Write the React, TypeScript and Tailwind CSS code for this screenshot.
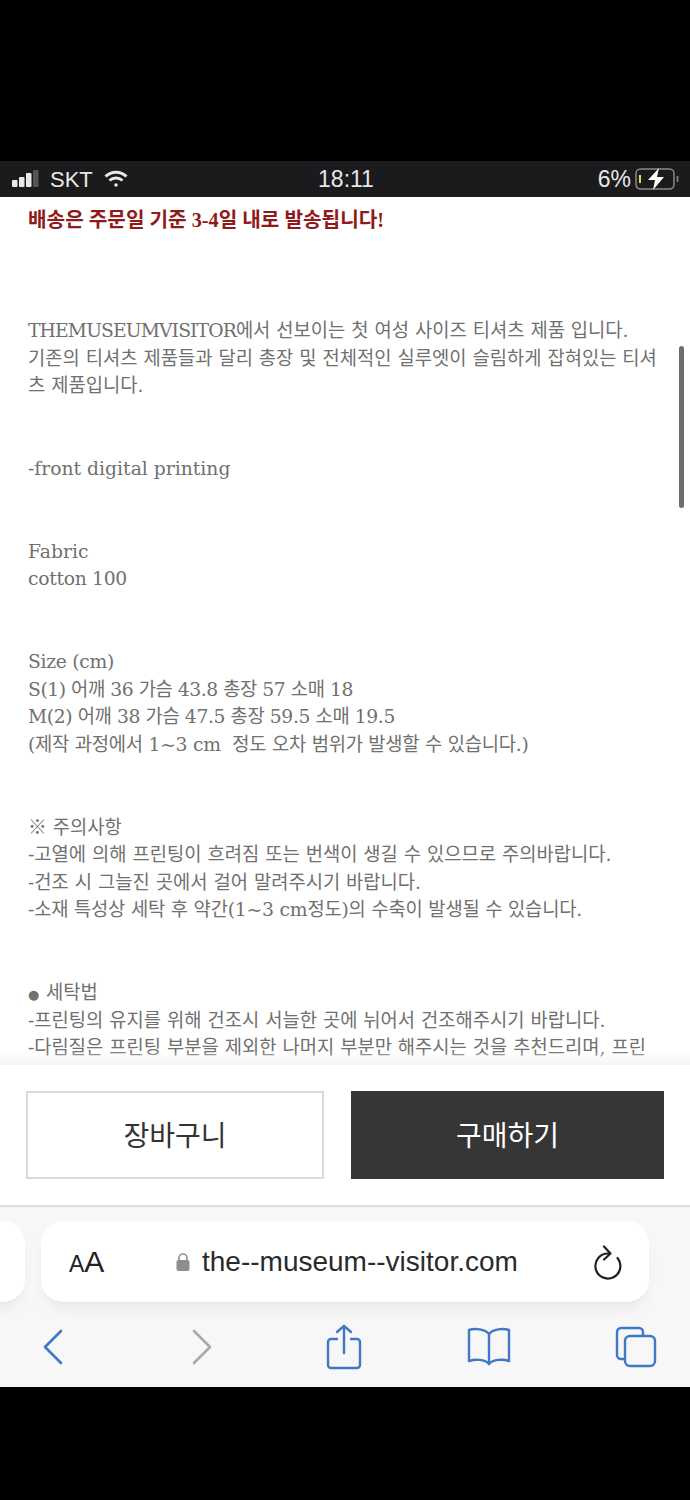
import type { ReactNode } from "react";

const lines: ReactNode[] = [
  <>
    <span className="tracking-[-0.9px]">THEMUSEUMVISITOR</span>에서 선보이는 첫 여성 사이즈 티셔츠 제품 입니다.
  </>,
  "기존의 티셔츠 제품들과 달리 총장 및 전체적인 실루엣이 슬림하게 잡혀있는 티셔",
  "츠 제품입니다.",
  "",
  "",
  "-front digital printing",
  "",
  "",
  "Fabric",
  <span className="tracking-[-0.3px]">cotton 100</span>,
  "",
  "",
  <span className="tracking-[-0.3px]">Size (cm)</span>,
  <span className="tracking-[-0.45px]">S(1) 어깨 36 가슴 43.8 총장 57 소매 18</span>,
  <span className="tracking-[-0.4px]">M(2) 어깨 38 가슴 47.5 총장 59.5 소매 19.5</span>,
  <span className="tracking-[-0.25px]">(제작 과정에서 1~3 cm  정도 오차 범위가 발생할 수 있습니다.)</span>,
  "",
  "",
  "※ 주의사항",
  "-고열에 의해 프린팅이 흐려짐 또는 번색이 생길 수 있으므로 주의바랍니다.",
  "-건조 시 그늘진 곳에서 걸어 말려주시기 바랍니다.",
  <span className="tracking-[-0.2px]">-소재 특성상 세탁 후 약간(1~3 cm정도)의 수축이 발생될 수 있습니다.</span>,
  "",
  "",
  <>
    <span className="inline-block w-[18px] text-[13px]">●</span>세탁법
  </>,
  "-프린팅의 유지를 위해 건조시 서늘한 곳에 뉘어서 건조해주시기 바랍니다.",
  "-다림질은 프린팅 부분을 제외한 나머지 부분만 해주시는 것을 추천드리며, 프린",
];

function StatusBar() {
  return (
    <div className="flex h-9 items-center justify-between bg-[#1b1b1d] pl-3 pr-2.5 text-[22px] text-[#e8e8e8]">
      <div className="flex w-[140px] items-center">
        <svg width="32" height="18" viewBox="0 0 32 18" fill="currentColor">
          <rect x="0" y="10" width="5.5" height="7" rx="1" />
          <rect x="7" y="7" width="5.5" height="10" rx="1" />
          <rect x="14" y="3" width="5.5" height="14" rx="1" />
          <rect x="21" y="0" width="5.5" height="17" rx="1" fill="#555" />
        </svg>
        <span className="ml-[6px]">SKT</span>
        <svg className="ml-[11px]" width="24" height="18" viewBox="0 0 24 18" fill="none" stroke="currentColor" strokeWidth="3">
          <path d="M1.5 6.5a15 15 0 0 1 21 0" />
          <path d="M5.5 10.5a9.5 9.5 0 0 1 13 0" />
          <circle cx="12" cy="15" r="1.8" fill="currentColor" stroke="none" />
        </svg>
      </div>
      <span className="text-[23px] font-medium">18:11</span>
      <div className="flex w-[140px] items-center justify-end">
        <span className="text-[23px]">6%</span>
        <svg className="ml-[4px]" width="45" height="24" viewBox="0 0 45 24" fill="none">
          <rect x="1" y="2" width="38" height="20" rx="4.5" stroke="#8a8a8a" strokeWidth="1.5" />
          <rect x="4" y="8" width="2" height="8" fill="#d8e04a" />
          <path d="M42.5 9v6" stroke="#777" strokeWidth="2" />
          <path d="M24 1 13 13h7l-2 10 11-13h-7z" fill="#fff" />
        </svg>
      </div>
    </div>
  );
}

function Toolbar() {
  return (
    <div className="flex h-[180px] flex-col bg-[#f7f7f7]">
      <div className="flex gap-4 pt-[14px]">
        <div className="-ml-6 h-[81px] w-[49px] rounded-[22px] bg-white shadow-lg shadow-black/5" />
        <div className="flex h-[81px] w-[608px] items-center rounded-[22px] bg-white pl-7 pr-[26px] shadow-lg shadow-black/5">
          <span className="w-[107px] text-[#222]">
            <span className="text-[23px]">A</span>
            <span className="text-[30px]">A</span>
          </span>
          <svg width="14" height="20" viewBox="0 0 14 20" fill="#8e8e8e">
            <path d="M3 8V6a4 4 0 0 1 8 0v2" fill="none" stroke="#8e8e8e" strokeWidth="1.6" />
            <rect x="0.5" y="8" width="13" height="11" rx="2" />
          </svg>
          <span className="ml-[12px] flex-1 text-[28px] text-[#2a2a2a]">the--museum--visitor.com</span>
          <svg width="30" height="36" viewBox="0 0 30 36" fill="none" stroke="#1f1f1f" strokeWidth="2.2" strokeLinecap="round" strokeLinejoin="round">
            <path d="M15 9.5a12.5 12.5 0 1 0 9.5 4.5" />
            <path d="M11 2.5l6.5 7-6.5 6" />
          </svg>
        </div>
      </div>
      <div className="flex items-center pl-[42px] pr-[33px] pt-[22px]">
        <svg width="22" height="36" viewBox="0 0 22 36" fill="none" stroke="#3f78c4" strokeWidth="2.6" strokeLinecap="round" strokeLinejoin="round">
          <path d="M19 2 3 18l16 16" />
        </svg>
        <svg className="ml-[127px]" width="22" height="36" viewBox="0 0 22 36" fill="none" stroke="#a9a9a9" strokeWidth="2.6" strokeLinecap="round" strokeLinejoin="round">
          <path d="M3 2l16 16L3 34" />
        </svg>
        <svg className="ml-[113px]" width="36" height="46" viewBox="0 0 36 46" fill="none" stroke="#3f78c4" strokeWidth="2.4" strokeLinecap="round" strokeLinejoin="round">
          <path d="M11 15H5a3 3 0 0 0-3 3v23a3 3 0 0 0 3 3h26a3 3 0 0 0 3-3V18a3 3 0 0 0-3-3h-6" />
          <path d="M18 29V2M11 8l7-6 7 6" />
        </svg>
        <svg className="ml-[104px]" width="46" height="40" viewBox="0 0 46 40" fill="none" stroke="#3f78c4" strokeWidth="2.4" strokeLinecap="round" strokeLinejoin="round">
          <path d="M23 7C19 2 9 1 3 3v31c6-2 16-2 20 3 4-5 14-5 20-3V3c-6-2-16-1-20 4z" />
          <path d="M23 7v30" />
        </svg>
        <svg className="ml-auto" width="42" height="42" viewBox="0 0 42 42" fill="none" stroke="#3f78c4" strokeWidth="2.4" strokeLinejoin="round">
          <path d="M9 33H6a4 4 0 0 1-4-4V6a4 4 0 0 1 4-4h18a4 4 0 0 1 4 4v4" />
          <rect x="10" y="10" width="30" height="30" rx="5" />
        </svg>
      </div>
    </div>
  );
}

export default function App() {
  return (
    <div className="flex h-[1500px] w-[690px] flex-col overflow-hidden bg-black font-['Liberation_Sans','Noto_Sans_CJK_KR',sans-serif]">
      <div className="h-[161px] shrink-0" />
      <StatusBar />
      <div className="relative h-[868px] shrink-0 overflow-hidden bg-white pl-7">
        <p className="pt-[10px] font-['Liberation_Serif','Noto_Sans_CJK_KR',serif] text-[20.2px] font-bold leading-[27px] text-[#8e1a1a]">
          배송은 주문일 기준 3-4일 내로 발송됩니다!
        </p>
        <div className="pt-[83px] font-['DejaVu_Serif','Noto_Sans_CJK_KR',serif] text-[18.75px] leading-[27.6px] text-[#707070]">
          {lines.map((line, i) => (
            <div key={i} className="h-[27.6px] whitespace-pre">
              {line}
            </div>
          ))}
        </div>
        <div className="absolute left-[679px] top-[149px] h-[162px] w-[5px] rounded-full bg-[#6e6e6e]" />
        <div className="absolute bottom-0 left-0 h-[14px] w-full bg-gradient-to-b from-transparent to-[#f5f5f5]" />
      </div>
      <div className="flex h-[142px] shrink-0 gap-[27px] border-b-2 border-[#dcdcdc] bg-white pl-[26px] pt-[26px]">
        <button className="flex h-[88px] w-[298px] items-center justify-center border-2 border-[#dadada] pt-[3px] text-[28px] text-[#333]">
          장바구니
        </button>
        <button className="flex h-[88px] w-[313px] items-center justify-center bg-[#363636] pt-[3px] text-[28px] text-white">
          구매하기
        </button>
      </div>
      <Toolbar />
    </div>
  );
}
